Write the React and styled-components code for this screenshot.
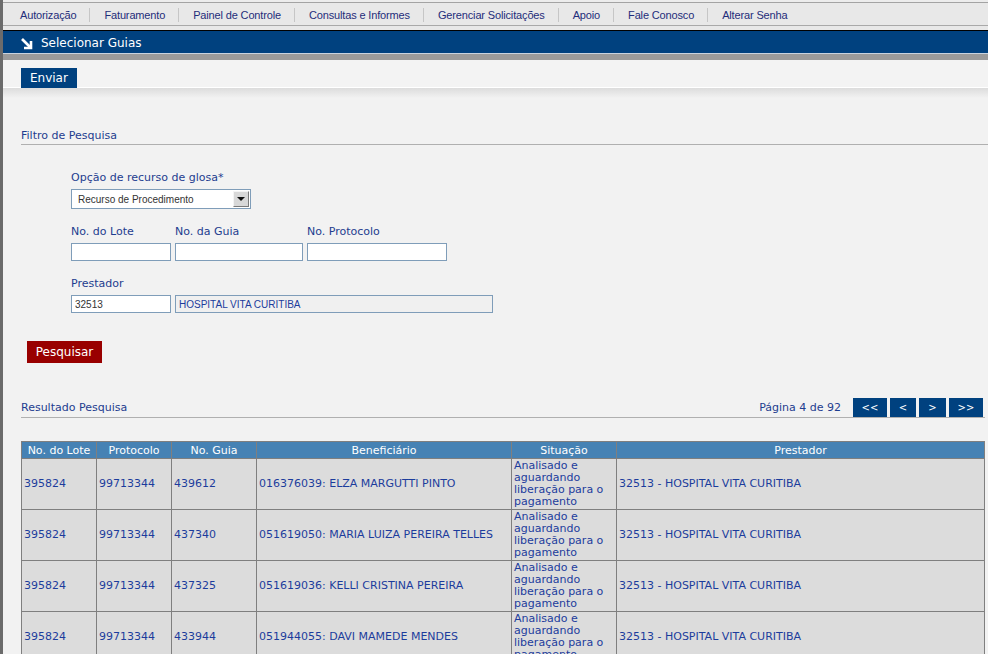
import React from "react";
import styled, { createGlobalStyle } from "styled-components";

const GlobalStyle = createGlobalStyle`
  html, body { margin: 0; padding: 0; overflow: hidden; background: #f2f2f2; }
  * { box-sizing: border-box; }
`;

const Page = styled.div`
  border-left: 3px solid #6b6b6b;
  min-height: 100vh;
  background: #f2f2f2;
  font-family: "DejaVu Sans", Verdana, sans-serif;
`;

const Header = styled.header`
  background: #e8e8e8;
`;

const Nav = styled.nav`
  display: flex;
  align-items: center;
  height: 26px;
  padding: 4px 0 0 17px;
  box-shadow: inset 0 2px 0 #ececec, inset 0 3px 0 #a3a3a3;
  border-bottom: 1px solid #a9a9a9;
`;

const NavItem = styled.a`
  font-family: "Liberation Sans", Arial, sans-serif;
  font-size: 11px;
  letter-spacing: -0.15px;
  color: #1f2d7a;
  text-decoration: none;
  white-space: nowrap;
`;

const NavSep = styled.span`
  width: 1px;
  height: 14px;
  background: #c6c6c6;
  margin: 0 14px 0 13px;
`;

const TitleBar = styled.div`
  margin-top: 4px;
  display: flex;
  align-items: center;
  gap: 8px;
  height: 24px;
  padding: 2px 0 0 17px;
  background: #00417f;
  border-top: 1px solid #000;
  border-bottom: 1px solid #c9d3df;
  color: #fff;
  font-size: 12px;
`;

const GrayBand = styled.div`
  height: 6px;
  background: #9b9b9b;
`;

const Toolbar = styled.div`
  height: 28px;
  padding: 7px 0 0 18px;
  background: #f3f3f3;
  border-bottom: 1px solid #ffffff;
`;

const ToolbarShadow = styled.div`
  height: 10px;
  background: linear-gradient(#dcdcdc, #f2f2f2);
`;

const Button = styled.button`
  display: inline-flex;
  align-items: center;
  justify-content: center;
  height: ${(p) => p.$h || 20}px;
  width: ${(p) => (p.$w ? `${p.$w}px` : "auto")};
  padding: 0 ${(p) => p.$px ?? 9}px;
  border: none;
  background: ${(p) => p.$bg || "#00417f"};
  color: #fff;
  font-family: "DejaVu Sans", Verdana, sans-serif;
  font-size: ${(p) => p.$fs || 12}px;
  cursor: pointer;
`;

const Main = styled.main`
  padding-left: 18px;
`;

const SectionHead = styled.div`
  display: flex;
  justify-content: space-between;
  align-items: flex-end;
  margin-top: ${(p) => p.$mt}px;
  margin-right: ${(p) => p.$mr || 0}px;
  border-bottom: 1px solid #b0b0b0;
`;

const SectionTitle = styled.h2`
  margin: 0;
  font-size: 11px;
  font-weight: normal;
  line-height: 14px;
  padding-bottom: ${(p) => p.$pb || 1}px;
  color: #1e3d8f;
`;

const Form = styled.div`
  padding-left: 50px;
  display: flex;
  flex-direction: column;
`;

const FieldRow = styled.div`
  display: flex;
  gap: 4px;
  margin-top: ${(p) => p.$mt}px;
`;

const Field = styled.div`
  display: flex;
  flex-direction: column;
  gap: 4px;
`;

const Label = styled.label`
  font-size: 11px;
  line-height: 14px;
  color: #1e3d8f;
  white-space: nowrap;
`;

const Input = styled.input`
  width: ${(p) => p.$w}px;
  height: 18px;
  margin: 0;
  padding: 0 3px;
  border: 1px solid #7f9db9;
  background: ${(p) => (p.disabled ? "#f0f0f0" : "#fff")};
  color: ${(p) => (p.disabled ? "#1c3c9c" : "#333")};
  font-family: "Liberation Sans", Arial, sans-serif;
  font-size: 10px;
  outline: none;
  &:disabled { -webkit-text-fill-color: #1c3c9c; opacity: 1; }
`;

const Select = styled.div`
  width: 180px;
  height: 20px;
  display: flex;
  align-items: center;
  justify-content: space-between;
  border: 1px solid #7f9db9;
  background: #fff;
  padding: 1px 1px 1px 6px;
  font-family: "Liberation Sans", Arial, sans-serif;
  font-size: 10px;
  color: #333;
`;

const SelectArrow = styled.span`
  width: 16px;
  height: 16px;
  display: flex;
  align-items: center;
  justify-content: center;
  background: #d8d8d8;
  border: 1px solid #7a7a7a;
  border-top-color: #f4f4f4;
  border-left-color: #f4f4f4;
  &::after {
    content: "";
    border-left: 4px solid transparent;
    border-right: 4px solid transparent;
    border-top: 4px solid #111;
  }
`;

const SearchRow = styled.div`
  margin: 28px 0 0 6px;
`;

const Pager = styled.div`
  display: flex;
  align-items: center;
  gap: 3px;
  margin-right: 2px;
`;

const PagerInfo = styled.span`
  font-size: 11px;
  color: #1e3d8f;
  margin-right: 9px;
`;

const Table = styled.table`
  margin-top: 23px;
  width: 964px;
  border-collapse: collapse;
  table-layout: fixed;
  font-size: 11px;
`;

const Th = styled.th`
  height: 17px;
  padding: 0;
  line-height: 15px;
  background: #4682b4;
  color: #fff;
  font-weight: normal;
  text-align: center;
  border: 1px solid #7f7f7f;
  white-space: nowrap;
`;

const Td = styled.td`
  padding: 1px 2px;
  height: 51px;
  line-height: 12px;
  vertical-align: middle;
  background: #dcdcdc;
  color: #1c3c9c;
  border: 1px solid #7f7f7f;
  white-space: ${(p) => (p.$wrap ? "normal" : "nowrap")};
  overflow: hidden;
`;

const ArrowIcon = () => (
  <svg width="13" height="13" viewBox="0 0 13 13" aria-hidden="true">
    <path d="M2 2 L10 10" stroke="#fff" strokeWidth="2.6" fill="none" />
    <path d="M11 4 V11 H4" stroke="#fff" strokeWidth="2.6" fill="none" />
  </svg>
);

const navItems = [
  "Autorização",
  "Faturamento",
  "Painel de Controle",
  "Consultas e Informes",
  "Gerenciar Solicitações",
  "Apoio",
  "Fale Conosco",
  "Alterar Senha",
];

const rows = [
  ["395824", "99713344", "439612", "016376039: ELZA MARGUTTI PINTO"],
  ["395824", "99713344", "437340", "051619050: MARIA LUIZA PEREIRA TELLES"],
  ["395824", "99713344", "437325", "051619036: KELLI CRISTINA PEREIRA"],
  ["395824", "99713344", "433944", "051944055: DAVI MAMEDE MENDES"],
];

export default function App() {
  return (
    <Page>
      <GlobalStyle />
      <Header>
        <Nav>
          {navItems.map((item, i) => (
            <React.Fragment key={item}>
              {i > 0 && <NavSep />}
              <NavItem href="#">{item}</NavItem>
            </React.Fragment>
          ))}
        </Nav>
        <TitleBar>
          <ArrowIcon />
          <span>Selecionar Guias</span>
        </TitleBar>
        <GrayBand />
      </Header>
      <Toolbar>
        <Button>Enviar</Button>
      </Toolbar>
      <ToolbarShadow />
      <Main>
        <SectionHead $mt={31}>
          <SectionTitle>Filtro de Pesquisa</SectionTitle>
        </SectionHead>
        <Form>
          <FieldRow $mt={26}>
            <Field>
              <Label>Opção de recurso de glosa*</Label>
              <Select>
                <span>Recurso de Procedimento</span>
                <SelectArrow />
              </Select>
            </Field>
          </FieldRow>
          <FieldRow $mt={16}>
            <Field>
              <Label>No. do Lote</Label>
              <Input $w={100} />
            </Field>
            <Field>
              <Label>No. da Guia</Label>
              <Input $w={128} />
            </Field>
            <Field>
              <Label>No. Protocolo</Label>
              <Input $w={140} />
            </Field>
          </FieldRow>
          <FieldRow $mt={16}>
            <Field>
              <Label>Prestador</Label>
              <Input $w={100} defaultValue="32513" />
            </Field>
            <Field>
              <Label>&nbsp;</Label>
              <Input $w={318} disabled value="HOSPITAL VITA CURITIBA" readOnly />
            </Field>
          </FieldRow>
        </Form>
        <SearchRow>
          <Button $bg="#990000" $h={22} $w={75} $px={0}>Pesquisar</Button>
        </SearchRow>
        <SectionHead $mt={35} $mr={3}>
          <SectionTitle $pb={2}>Resultado Pesquisa</SectionTitle>
          <Pager>
            <PagerInfo>Página 4 de 92</PagerInfo>
            <Button $h={19} $fs={10} $w={34} $px={0}>&lt;&lt;</Button>
            <Button $h={19} $fs={10} $w={26} $px={0}>&lt;</Button>
            <Button $h={19} $fs={10} $w={27} $px={0}>&gt;</Button>
            <Button $h={19} $fs={10} $w={34} $px={0}>&gt;&gt;</Button>
          </Pager>
        </SectionHead>
        <Table>
          <colgroup>
            <col style={{ width: 75 }} />
            <col style={{ width: 75 }} />
            <col style={{ width: 85 }} />
            <col style={{ width: 255 }} />
            <col style={{ width: 105 }} />
            <col />
          </colgroup>
          <thead>
            <tr>
              <Th>No. do Lote</Th>
              <Th>Protocolo</Th>
              <Th>No. Guia</Th>
              <Th>Beneficiário</Th>
              <Th>Situação</Th>
              <Th>Prestador</Th>
            </tr>
          </thead>
          <tbody>
            {rows.map((r, i) => (
              <tr key={i}>
                <Td>{r[0]}</Td>
                <Td>{r[1]}</Td>
                <Td>{r[2]}</Td>
                <Td>{r[3]}</Td>
                <Td $wrap>Analisado e aguardando liberação para o pagamento</Td>
                <Td>32513 - HOSPITAL VITA CURITIBA</Td>
              </tr>
            ))}
          </tbody>
        </Table>
      </Main>
    </Page>
  );
}
